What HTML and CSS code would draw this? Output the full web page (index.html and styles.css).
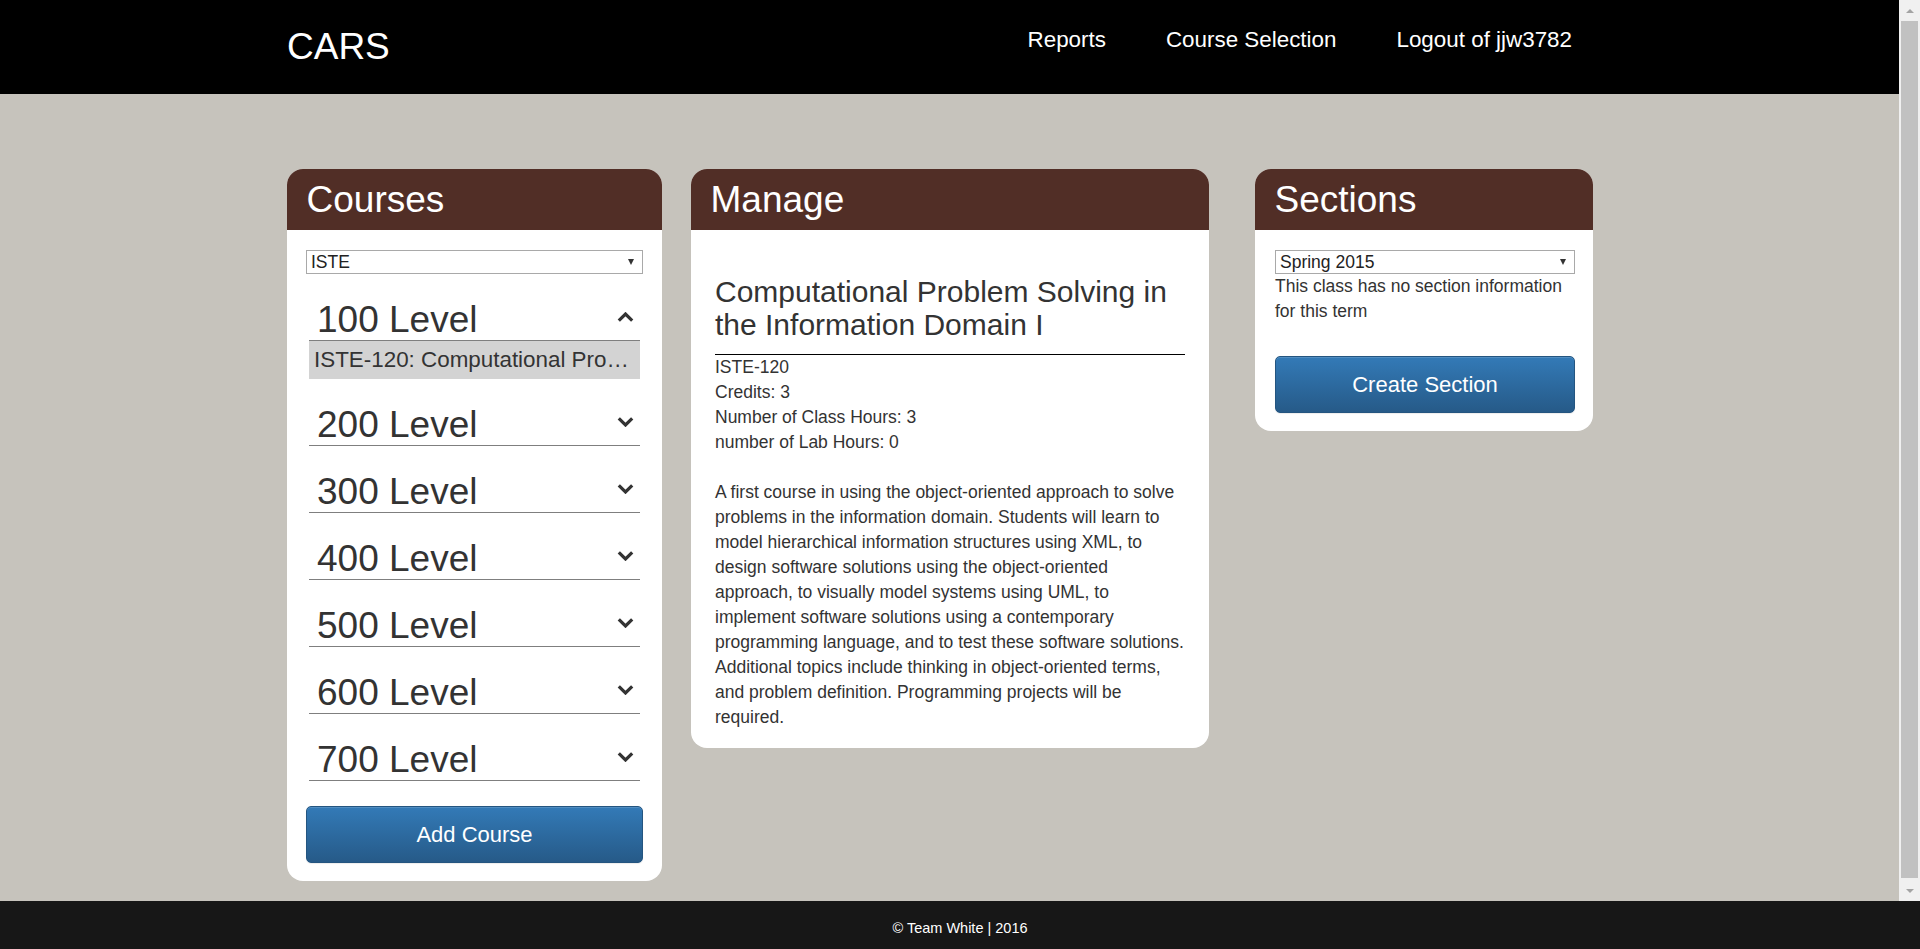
FILE: index.html
```html
<!DOCTYPE html>
<html lang="en">
<head>
<meta charset="utf-8">
<title>CARS</title>
<link rel="stylesheet" href="styles.css">
</head>
<body>
<div class="viewport">
  <div class="page">
    <header class="topbar">
      <div class="topbar-inner">
        <a class="brand" href="#">CARS</a>
        <nav class="nav">
          <a href="#">Reports</a>
          <a href="#">Course Selection</a>
          <a href="#">Logout of jjw3782</a>
        </nav>
      </div>
    </header>
    <main class="main">
      <section class="panel panel-courses">
        <h1 class="panel-title">Courses</h1>
        <div class="panel-body">
          <div class="select-wrap select-courses">
            <select class="select"><option>ISTE</option></select>
            <span class="caret"></span>
          </div>
          <div class="levels">
            <div class="level">
              <div class="level-head"><span>100 Level</span>
                <svg class="chev" width="17" height="10" viewBox="0 0 17 10"><polyline points="1.8,8.6 8.5,2 15.2,8.6" fill="none" stroke="#333" stroke-width="3.2"/></svg>
              </div>
              <div class="level-item">ISTE-120: Computational Pro&hellip;</div>
            </div>
            <div class="level">
              <div class="level-head"><span>200 Level</span>
                <svg class="chev" width="17" height="10" viewBox="0 0 17 10"><polyline points="1.8,1.4 8.5,8 15.2,1.4" fill="none" stroke="#333" stroke-width="3.2"/></svg>
              </div>
            </div>
            <div class="level">
              <div class="level-head"><span>300 Level</span>
                <svg class="chev" width="17" height="10" viewBox="0 0 17 10"><polyline points="1.8,1.4 8.5,8 15.2,1.4" fill="none" stroke="#333" stroke-width="3.2"/></svg>
              </div>
            </div>
            <div class="level">
              <div class="level-head"><span>400 Level</span>
                <svg class="chev" width="17" height="10" viewBox="0 0 17 10"><polyline points="1.8,1.4 8.5,8 15.2,1.4" fill="none" stroke="#333" stroke-width="3.2"/></svg>
              </div>
            </div>
            <div class="level">
              <div class="level-head"><span>500 Level</span>
                <svg class="chev" width="17" height="10" viewBox="0 0 17 10"><polyline points="1.8,1.4 8.5,8 15.2,1.4" fill="none" stroke="#333" stroke-width="3.2"/></svg>
              </div>
            </div>
            <div class="level">
              <div class="level-head"><span>600 Level</span>
                <svg class="chev" width="17" height="10" viewBox="0 0 17 10"><polyline points="1.8,1.4 8.5,8 15.2,1.4" fill="none" stroke="#333" stroke-width="3.2"/></svg>
              </div>
            </div>
            <div class="level">
              <div class="level-head"><span>700 Level</span>
                <svg class="chev" width="17" height="10" viewBox="0 0 17 10"><polyline points="1.8,1.4 8.5,8 15.2,1.4" fill="none" stroke="#333" stroke-width="3.2"/></svg>
              </div>
            </div>
          </div>
          <button class="btn btn-courses">Add Course</button>
        </div>
      </section>

      <section class="panel panel-manage">
        <h1 class="panel-title">Manage</h1>
        <div class="panel-body manage-body">
          <h2 class="course-title">Computational Problem Solving in the Information Domain I</h2>
          <hr class="rule">
          <div class="facts">
            <div>ISTE-120</div>
            <div>Credits: 3</div>
            <div>Number of Class Hours: 3</div>
            <div>number of Lab Hours: 0</div>
          </div>
          <p class="desc">A first course in using the object-oriented approach to solve problems in the information domain. Students will learn to model hierarchical information structures using XML, to design software solutions using the object-oriented approach, to visually model systems using UML, to implement software solutions using a contemporary programming language, and to test these software solutions. Additional topics include thinking in object-oriented terms, and problem definition. Programming projects will be required.</p>
        </div>
      </section>

      <section class="panel panel-sections">
        <h1 class="panel-title">Sections</h1>
        <div class="panel-body sections-body">
          <div class="select-wrap">
            <select class="select"><option>Spring 2015</option></select>
            <span class="caret"></span>
          </div>
          <p class="note">This class has no section information for this term</p>
          <button class="btn btn-sections">Create Section</button>
        </div>
      </section>
    </main>
  </div>
  <div class="scrollbar" aria-hidden="true">
    <div class="sb-btn"><span class="sb-arrow-up"></span></div>
    <div class="sb-thumb"></div>
    <div class="sb-btn"><span class="sb-arrow-down"></span></div>
  </div>
</div>
<footer class="footer">&copy; Team White | 2016</footer>
</body>
</html>
```

FILE: styles.css
```css
* { box-sizing: border-box; }

html, body {
  margin: 0;
  padding: 0;
  height: 100%;
  overflow: hidden;
}

body {
  font-family: "Liberation Sans", Arial, sans-serif;
  color: #333;
  background: #171717;
}

.viewport {
  height: 901px;
  display: flex;
  background: #c6c3bc;
}

.page {
  flex: 1;
  min-width: 0;
  overflow: hidden;
}

/* fake classic scrollbar */
.scrollbar {
  width: 21px;
  flex: none;
  background: #f0f0f0;
  display: flex;
  flex-direction: column;
}
.sb-btn {
  height: 21px;
  flex: none;
  display: flex;
  align-items: center;
  justify-content: center;
}
.sb-thumb {
  flex: 1;
  margin: 0 2px 2px;
  background: #c1c1c1;
}
.sb-arrow-up {
  width: 0;
  height: 0;
  border-left: 4px solid transparent;
  border-right: 4px solid transparent;
  border-bottom: 4px solid #a3a3a3;
  margin-top: 1px;
}
.sb-arrow-down {
  width: 0;
  height: 0;
  border-left: 4px solid transparent;
  border-right: 4px solid transparent;
  border-top: 4px solid #a3a3a3;
}

/* header */
.topbar {
  height: 94px;
  background: #000;
}
.topbar-inner {
  margin-left: 287px;
  width: 1306px;
  height: 94px;
  display: flex;
  align-items: flex-start;
  padding-right: 21px;
}
.brand {
  color: #fff;
  text-decoration: none;
  font-size: 37px;
  line-height: 37px;
  padding-top: 28px;
}
.nav {
  margin-left: auto;
  display: flex;
  gap: 60px;
  padding-top: 29px;
}
.nav a {
  color: #fff;
  text-decoration: none;
  font-size: 22.4px;
  line-height: 22px;
}

/* main */
.main {
  display: flex;
  align-items: flex-start;
  padding: 75px 0 20px 287px;
}

.panel {
  background: #fff;
  border-radius: 16px;
  overflow: hidden;
}
.panel-courses { width: 375px; }
.panel-manage { width: 518px; margin-left: 29px; }
.panel-sections { width: 338px; margin-left: 46px; }

.panel-title {
  margin: 0;
  height: 61px;
  line-height: 61px;
  background: #512e26;
  color: #fff;
  font-size: 37px;
  font-weight: normal;
  padding: 0 17px 0 19.5px;
}

.panel-body {
  padding: 20px 19px 18px;
}

/* select */
.select-wrap {
  position: relative;
}
.select-courses {
  margin-bottom: 1px;
}
.select {
  display: block;
  width: 100%;
  height: 24px;
  appearance: none;
  -webkit-appearance: none;
  border: 1px solid #a9a9a9;
  border-radius: 0;
  background: #fff;
  font-family: "Liberation Sans", Arial, sans-serif;
  font-size: 17.5px;
  line-height: 22px;
  color: #222;
  padding: 0 20px 0 4px;
  margin: 0;
}
.caret {
  position: absolute;
  right: 9px;
  top: 9px;
  width: 0;
  height: 0;
  border-left: 3.5px solid transparent;
  border-right: 3.5px solid transparent;
  border-top: 6px solid #333;
  pointer-events: none;
}

/* levels */
.levels {
  margin: 0 3px;
}
.level-head {
  margin-top: 25px;
  display: flex;
  align-items: flex-start;
  justify-content: space-between;
  font-size: 37px;
  line-height: 40px;
  padding-top: 1px;
  padding-left: 8px;
  border-bottom: 1px solid #7f7f7f;
  color: #333;
}
.chev {
  margin-top: 12px;
  margin-right: 6px;
  flex: none;
}
.level-item {
  background: #d3d3d3;
  height: 38px;
  line-height: 38px;
  font-size: 22.4px;
  padding: 0 5px;
  white-space: nowrap;
  overflow: hidden;
  color: #333;
}

/* buttons */
.btn {
  display: block;
  width: 100%;
  height: 57px;
  border: 1px solid #245580;
  border-radius: 5px;
  background: linear-gradient(to bottom, #337ab7 0%, #265a88 100%);
  color: #fff;
  font-family: "Liberation Sans", Arial, sans-serif;
  font-size: 22px;
  line-height: 55px;
  padding: 0;
  text-align: center;
  box-shadow: inset 0 1px 0 rgba(255,255,255,0.15), 0 1px 1px rgba(0,0,0,0.075);
}
.btn-courses { margin-top: 25px; }

/* manage */
.manage-body {
  padding: 24px 24px 18px;
}
.course-title {
  margin: 21px 0 0;
  font-size: 30px;
  line-height: 33px;
  font-weight: normal;
  color: #333;
}
.rule {
  margin: 13px 0 0;
  border: 0;
  border-top: 1px solid #000;
  height: 0;
}
.facts, .desc, .note {
  font-size: 17.5px;
  line-height: 25px;
  color: #333;
}
.desc {
  margin: 25px 0 0;
}

/* sections */
.sections-body {
  padding: 20px 18px 18px 20px;
}
.note {
  margin: 0;
}
.btn-sections {
  margin-top: 32px;
}

/* footer */
.footer {
  height: 48px;
  background: #171717;
  color: #fff;
  text-align: center;
  font-size: 14.5px;
  line-height: 17px;
  padding-top: 19px;
}
```
